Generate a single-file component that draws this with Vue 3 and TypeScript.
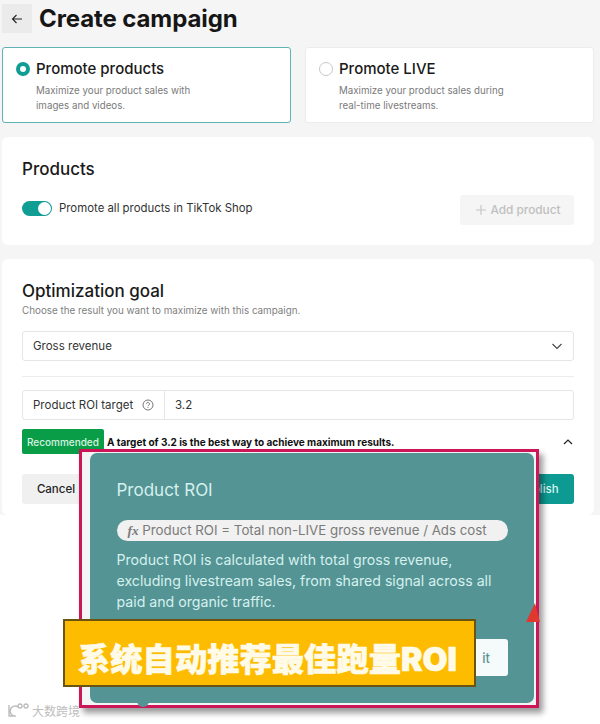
<template>
  <div class="page">
    <header class="head">
      <button class="back" type="button" aria-label="Back">
        <svg width="12" height="12" viewBox="0 0 12 12" fill="none" stroke="#222" stroke-width="1.1">
          <path d="M11 6H1.5M5.5 2 1.5 6l4 4" />
        </svg>
      </button>
      <h1>Create campaign</h1>
    </header>

    <div class="types">
      <div
        v-for="t in types"
        :key="t.title"
        class="type"
        :class="{ 'is-on': t.active }"
      >
        <span class="radio" />
        <div>
          <div class="type-title">{{ t.title }}</div>
          <p>{{ t.line1 }}<br>{{ t.line2 }}</p>
        </div>
      </div>
    </div>

    <section class="card products">
      <h2>Products</h2>
      <div class="products-row">
        <span class="toggle"><i /></span>
        <span class="toggle-label">Promote all products in TikTok Shop</span>
        <button class="add" type="button">
          <svg width="12" height="12" viewBox="0 0 12 12" stroke="#c4c4c4" stroke-width="1.1">
            <path d="M6 1v10M1 6h10" />
          </svg>
          Add product
        </button>
      </div>
    </section>

    <section class="card goal">
      <h2>Optimization goal</h2>
      <p class="goal-sub">Choose the result you want to maximize with this campaign.</p>
      <div class="select">
        Gross revenue
        <svg width="12" height="12" viewBox="0 0 12 12" fill="none" stroke="#444" stroke-width="1.1">
          <path d="M1.5 4 6 8.5 10.5 4" />
        </svg>
      </div>
      <hr>
      <div class="roi">
        <div class="roi-label">
          Product ROI target
          <svg width="12" height="12" viewBox="0 0 12 12" fill="none" stroke="#666" stroke-width="0.9">
            <circle cx="6" cy="6" r="5" />
            <path d="M4.5 4.8a1.5 1.5 0 1 1 2.3 1.3c-.5.3-.8.5-.8 1.1M6 8.2v.8" />
          </svg>
        </div>
        <div class="roi-value">3.2</div>
      </div>
      <div class="rec">
        <span class="rec-badge">Recommended</span>
        <b>A target of 3.2 is the best way to achieve maximum results.</b>
        <svg width="10" height="10" viewBox="0 0 10 10" fill="none" stroke="#222" stroke-width="1.2">
          <path d="M1 7l4-4 4 4" />
        </svg>
      </div>
      <div class="actions">
        <button class="cancel" type="button">Cancel</button>
        <button class="publish" type="button">Publish</button>
      </div>
    </section>

    <div class="frame" />
    <div class="pop">
      <div class="pop-title">Product ROI</div>
      <div class="formula"><em>fx</em> Product ROI = Total non-LIVE gross revenue / Ads cost</div>
      <p>
        Product ROI is calculated with total gross revenue,<br>
        excluding livestream sales, from shared signal across all<br>
        paid and organic traffic.
      </p>
      <button class="got" type="button">it</button>
      <span class="pop-tail" />
    </div>
    <svg class="marker" width="14" height="20" viewBox="0 0 14 20"><path d="M9 0 14 19H0z" fill="#e0382f" /></svg>
    <div class="banner">系统自动推荐最佳跑量ROI</div>
    <div class="mark">
      <svg width="22" height="15" viewBox="0 0 22 15" fill="none" stroke="#bdbdbd" stroke-width="1.4">
        <path d="M2 2v11h6M11 4a5 5 0 1 0-2 9" />
        <circle cx="13" cy="3" r="2" />
        <circle cx="19" cy="3" r="2" />
      </svg>
      <span>大数跨境</span>
    </div>
  </div>
</template>

<script setup lang="ts">
const types = [
  {
    title: 'Promote products',
    line1: 'Maximize your product sales with',
    line2: 'images and videos.',
    active: true,
  },
  {
    title: 'Promote LIVE',
    line1: 'Maximize your product sales during',
    line2: 'real-time livestreams.',
    active: false,
  },
];
</script>

<style>
html,
body {
  margin: 0;
  background: #fff;
}
</style>

<style scoped>
.page {
  position: relative;
  width: 600px;
  height: 724px;
  overflow: hidden;
  font-family: Inter, "Noto Sans", sans-serif;
  color: #1a1a1a;
  background: linear-gradient(#f5f5f5 515px, #fff 515px);
  padding: 4px 6px 0 2px;
  box-sizing: border-box;
}

.head {
  display: flex;
  align-items: center;
  gap: 7px;
  height: 29px;
}

.back {
  width: 30px;
  height: 29px;
  display: flex;
  align-items: center;
  justify-content: center;
  border: 0;
  padding: 0;
  background: #ebebeb;
}

h1 {
  margin: 0;
  font-size: 24px;
  font-weight: 700;
  letter-spacing: -0.1px;
  color: #161616;
}

.types {
  display: grid;
  grid-template-columns: 289px 289px;
  gap: 14px;
  margin-top: 14px;
}

.type {
  display: flex;
  gap: 6px;
  height: 76px;
  box-sizing: border-box;
  padding: 12px 13px 0 13px;
  background: #fff;
  border: 1px solid #ececec;
  border-radius: 3px;
}

.type.is-on {
  border-color: #5fb3b5;
}

.radio {
  flex: none;
  width: 14px;
  height: 14px;
  margin-top: 2px;
  box-sizing: border-box;
  border: 1px solid #c8c8c8;
  border-radius: 50%;
}

.is-on .radio {
  border: 4px solid #0f9d94;
}

.type-title {
  font-size: 15px;
  font-weight: 500;
  line-height: 18px;
}

.type p {
  margin: 5px 0 0;
  font-size: 9.75px;
  line-height: 15px;
  color: #7a7a7a;
}

.card {
  background: #fff;
  border-radius: 6px;
  margin-top: 14px;
  padding: 0 20px;
}

.card h2 {
  margin: 0;
  font-size: 17px;
  font-weight: 500;
  line-height: 22px;
}

.products {
  height: 108px;
  box-sizing: border-box;
  padding-top: 21px;
}

.products-row {
  display: flex;
  align-items: center;
  margin-top: 15px;
}

.toggle {
  width: 30px;
  height: 15px;
  margin-bottom: 4px;
  border-radius: 8px;
  background: #0f9d94;
  display: flex;
  justify-content: flex-end;
  align-items: center;
  padding-right: 1px;
  box-sizing: border-box;
}

.toggle i {
  width: 13px;
  height: 13px;
  background: #fff;
  border-radius: 50%;
}

.toggle-label {
  margin-left: 7px;
  margin-bottom: 4px;
  font-size: 11.4px;
  color: #333;
}

.add {
  margin-left: auto;
  width: 114px;
  height: 30px;
  display: flex;
  align-items: center;
  justify-content: center;
  gap: 4px;
  border: 0;
  padding: 0 0 0 1px;
  border-radius: 3px;
  background: #f5f5f5;
  font: 500 11.8px Inter, sans-serif;
  color: #c0c0c0;
}

.goal {
  height: 256px;
  box-sizing: border-box;
  padding-top: 21px;
}

.goal-sub {
  margin: 1px 0 0;
  font-size: 9.83px;
  line-height: 15px;
  color: #808080;
}

.select {
  display: flex;
  justify-content: space-between;
  align-items: center;
  height: 30px;
  box-sizing: border-box;
  margin-top: 13px;
  padding: 0 10px;
  border: 1px solid #e6e6e6;
  border-radius: 3px;
  font-size: 11.5px;
  color: #333;
}

hr {
  border: 0;
  border-top: 1px solid #ececec;
  margin: 15px 0 13px;
}

.roi {
  display: flex;
  height: 30px;
  box-sizing: border-box;
  border: 1px solid #e6e6e6;
  border-radius: 3px;
  font-size: 11.5px;
  color: #333;
}

.roi-label {
  width: 142px;
  display: flex;
  align-items: center;
  gap: 9px;
  padding-left: 10px;
  box-sizing: border-box;
  border-right: 1px solid #e6e6e6;
}

.roi-value {
  display: flex;
  align-items: center;
  padding-left: 10px;
}

.rec {
  display: flex;
  align-items: center;
  margin-top: 9px;
  font-size: 10px;
  color: #111;
}

.rec-badge {
  height: 25px;
  display: flex;
  align-items: center;
  padding: 0 5px;
  margin-right: 3px;
  background: #0a9d47;
  border-radius: 2px;
  color: #d8f3e2;
  font-weight: 500;
}

.rec b {
  font-weight: 700;
}

.rec svg {
  margin-left: auto;
  margin-right: 1px;
}

.actions {
  display: flex;
  justify-content: space-between;
  margin-top: 20px;
}

.actions button {
  height: 30px;
  border: 0;
  border-radius: 3px;
  font: 500 11.5px Inter, sans-serif;
}

.cancel {
  width: 68px;
  background: #f0f0f0;
  color: #222;
}

.publish {
  width: 71px;
  background: #0d9a92;
  color: #d8f5f2;
}

.frame {
  position: absolute;
  left: 79px;
  top: 449px;
  width: 460px;
  height: 259px;
  box-sizing: border-box;
  border: 3px solid #cc1658;
  box-shadow: 4px 5px 6px rgba(0, 0, 0, 0.4);
  background: #f3f4f4;
}

.pop {
  position: absolute;
  left: 90px;
  top: 453px;
  width: 444px;
  height: 250px;
  box-sizing: border-box;
  padding: 27px 26px 0 26.5px;
  background: #549494;
  border-radius: 7px;
  color: #d5f0ee;
}

.pop-title {
  font-size: 17px;
  line-height: 20px;
}

.formula {
  width: 391px;
  height: 21px;
  box-sizing: border-box;
  margin-top: 20px;
  padding-left: 11px;
  border-radius: 11px;
  background: #f0f1f0;
  color: #7b7b7b;
  font-size: 13.3px;
  line-height: 21px;
  white-space: nowrap;
}

.formula em {
  font-family: "Liberation Serif", serif;
  font-weight: 700;
}

.pop p {
  margin: 8px 0 0;
  font-size: 14.15px;
  line-height: 21px;
  white-space: nowrap;
}

.got {
  position: absolute;
  left: 310px;
  top: 186px;
  width: 108px;
  height: 37px;
  border: 0;
  border-radius: 3px;
  background: #f5fbfb;
  color: #5c9494;
  font: 500 13px Inter, sans-serif;
  text-align: right;
  padding: 0 18px 0 0;
}

.pop-tail {
  position: absolute;
  left: 47px;
  top: 248px;
  width: 12px;
  height: 6px;
  background: #549494;
  border-radius: 0 0 6px 6px;
}

.marker {
  position: absolute;
  left: 526px;
  top: 603px;
}

.banner {
  position: absolute;
  left: 63px;
  top: 619px;
  width: 413px;
  height: 68px;
  box-sizing: border-box;
  border: 2px solid #6b5410;
  background: #fdbc00;
  color: #fffbe8;
  font-family: Inter, "Noto Sans CJK SC", sans-serif;
  font-size: 32.3px;
  font-weight: 900;
  -webkit-text-stroke: 0.6px #fffbe8;
  line-height: 78px;
  padding-left: 13px;
  white-space: nowrap;
}

.mark {
  position: absolute;
  left: 7px;
  top: 703px;
  display: flex;
  align-items: center;
  gap: 3px;
  color: #bdbdbd;
  font-family: "Noto Sans CJK SC", sans-serif;
  font-size: 12px;
  line-height: 15px;
}
</style>
